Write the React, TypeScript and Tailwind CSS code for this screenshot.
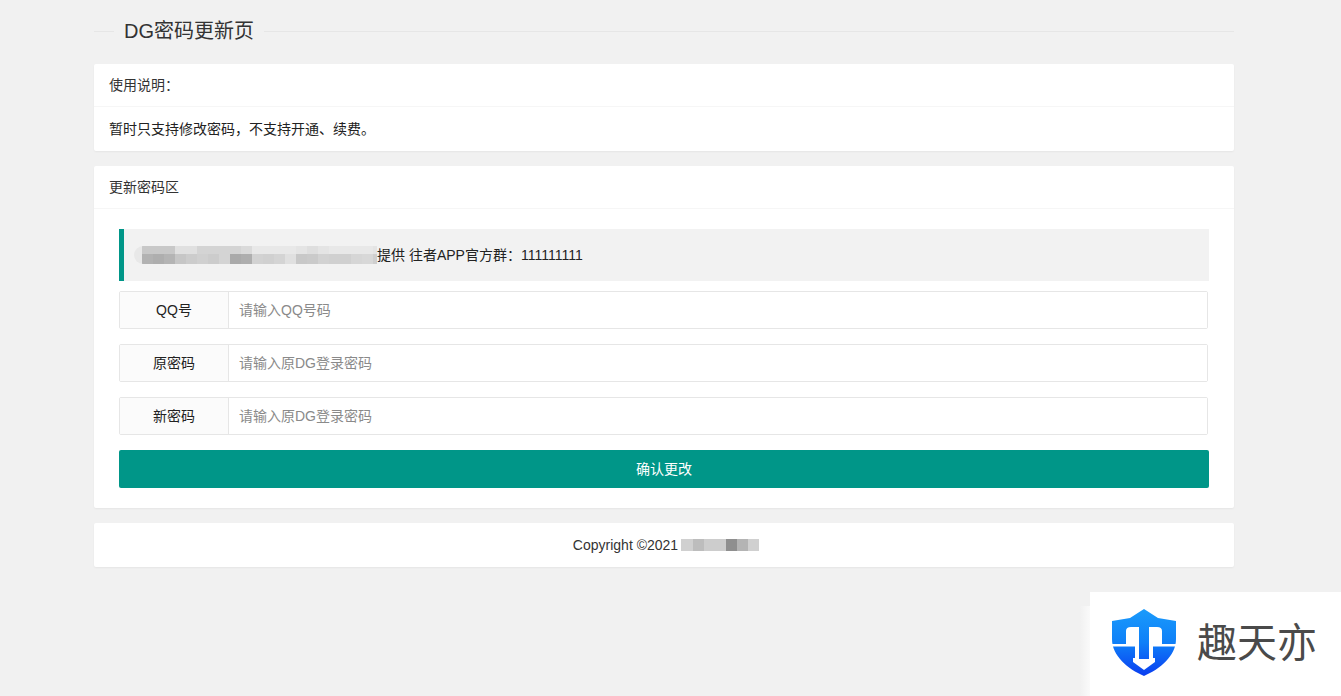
const font = { fontFamily: '"Liberation Sans","Noto Sans CJK SC",sans-serif' };

const quoteTop = ["#c8c8c8","#c8c8c8","#c8c8c8","#e0e0e0","#e0e0e0","#d4d4d4","#d4d4d4","#d4d4d4","#d4d4d4","#dadada","#e8e8e8","#e8e8e8","#e8e8e8","#e8e8e8","#e4e4e4","#dedede","#e4e4e4","#e8e8e8","#e8e8e8","#e8e8e8","#e8e8e8","#e4e4e4"];
const quoteBottom = ["#b2b2b2","#aeaeae","#b4b4b4","#c6c6c6","#cccccc","#d0d0d0","#cccccc","#d4d4d4","#aaaaaa","#aeaeae","#d2d2d2","#d0d0d0","#d4d4d4","#e0e0e0","#c8c8c8","#cacaca","#d2d2d2","#d0d0d0","#d0d0d0","#d6d6d6","#d8d8d8","#cfcfcf"];

const footBlur = [
  ["w-[12px]", "#d0d0d0"], ["w-[11px]", "#bdbdbd"], ["w-[22px]", "#cdcdcd"], ["w-[11px]", "#8f8f8f"], ["w-[11px]", "#b4b4b4"], ["w-[11px]", "#d0d0d0"],
];

function Field({ label, placeholder }: { label: string; placeholder: string }) {
  return (
    <div className="flex h-[38px] w-[1089px] rounded-[2px] border border-[#e6e6e6] bg-white">
      <div className="flex w-[109px] shrink-0 items-center justify-center border-r border-[#e6e6e6] bg-[#fbfbfb] text-[14px] text-[#222222]">{label}</div>
      <input readOnly placeholder={placeholder} className="min-w-0 flex-1 bg-white pl-[10px] text-[14px] outline-none placeholder:text-[#8a8a8a]" />
    </div>
  );
}

function Logo() {
  return (
    <svg width="64" height="68" viewBox="0 0 64 68" className="shrink-0">
      <defs>
        <linearGradient id="sh" x1="0" y1="0" x2="0" y2="1">
          <stop offset="0" stopColor="#1a9bfb" />
          <stop offset="0.5" stopColor="#0f80f8" />
          <stop offset="1" stopColor="#0a3df0" />
        </linearGradient>
      </defs>
      <path fill="url(#sh)" d="M32 0 L46 9 L64 12 L64 30 C64 47 48 60 32 67 C16 60 0 47 0 30 L0 12 L18 9 Z" />
      <path fill="#ffffff" d="M0 35 L23 35 L23 37.5 L0 37.5 Z M41 35 L64 35 L64 37.5 L41 37.5 Z" />
      <path fill="#ffffff" d="M14 35 L14 22 Q14 18 19 18 L27 18 L27 50 L37 50 L37 18 L45 18 Q50 18 50 22 L50 35 L41 35 L41 49 L43 49 L43 53 L32 61 L21 53 L21 49 L23 49 L23 35 Z" />
    </svg>
  );
}

export default function App() {
  return (
    <div style={font} className="relative h-[696px] w-full overflow-hidden bg-[#f1f1f1] text-[#333333]">
      <div className="ml-[94px] w-[1140px]">
        <div className="flex h-[64px] items-start">
          <div className="mt-[31px] h-px w-[20px] bg-[#e6e6e6]" />
          <div className="mt-[16px] px-[10px] text-[20px] leading-[30px] text-[#333333]">DG密码更新页</div>
          <div className="mt-[31px] h-px flex-1 bg-[#e6e6e6]" />
        </div>

        <div className="rounded-[2px] bg-white shadow-[0_1px_2px_0_rgba(0,0,0,0.05)]">
          <div className="h-[43px] border-b border-[#f6f6f6] px-[15px] text-[14px] leading-[42px] text-[#333333]">使用说明：</div>
          <div className="px-[15px] py-[10px] text-[14px] leading-[24px] text-[#222222]">暂时只支持修改密码，不支持开通、续费。</div>
        </div>

        <div className="mt-[15px] rounded-[2px] bg-white shadow-[0_1px_2px_0_rgba(0,0,0,0.05)]">
          <div className="h-[43px] border-b border-[#f6f6f6] px-[15px] text-[14px] leading-[42px] text-[#333333]">更新密码区</div>
          <div className="flex flex-col px-[25px] pb-[20px] pt-[20px]">
            <div className="flex h-[52px] items-center border-l-[5px] border-[#009688] bg-[#f2f2f2] pl-[10px] text-[14px] text-[#222222]">
              <div className="flex h-[18px] w-[243px] shrink-0 overflow-hidden rounded-l-full rounded-r-[6px] bg-[#e8e8e8] pl-[8px]">
                {quoteTop.map((a, i) => (
                  <div key={i} className="flex w-[11px] shrink-0 flex-col">
                    <div className="h-[8px]" style={{ backgroundColor: a }} />
                    <div className="h-[10px]" style={{ backgroundColor: quoteBottom[i] }} />
                  </div>
                ))}
              </div>
              <span>提供 往者APP官方群：111111111</span>
            </div>
            <div className="mt-[10px] flex flex-col gap-[15px]">
              <Field label="QQ号" placeholder="请输入QQ号码" />
              <Field label="原密码" placeholder="请输入原DG登录密码" />
              <Field label="新密码" placeholder="请输入原DG登录密码" />
              <div className="flex h-[38px] items-center justify-center rounded-[2px] bg-[#009688] text-[14px] text-white">确认更改</div>
            </div>
          </div>
        </div>

        <div className="mt-[15px] flex h-[44px] items-center justify-center rounded-[2px] bg-white pl-[4px] text-[14px] text-[#333333] shadow-[0_1px_2px_0_rgba(0,0,0,0.05)]">
          <span>Copyright ©2021</span>
          <div className="ml-[3px] flex h-[12px]">
            {footBlur.map(([w, c], i) => (
              <div key={i} className={w} style={{ backgroundColor: c }} />
            ))}
          </div>
        </div>
      </div>

      <div className="absolute bottom-0 right-[251px] h-[90px] w-[10px] bg-gradient-to-r from-transparent to-[#fafafa]" />
      <div className="absolute bottom-0 right-0 flex h-[104px] w-[251px] items-start bg-white pl-[22px] pt-[17px]">
        <Logo />
        <span className="ml-[21px] mt-[9px] text-[40px] leading-[50px] text-[#4a4a4a]">趣天亦</span>
      </div>
    </div>
  );
}
